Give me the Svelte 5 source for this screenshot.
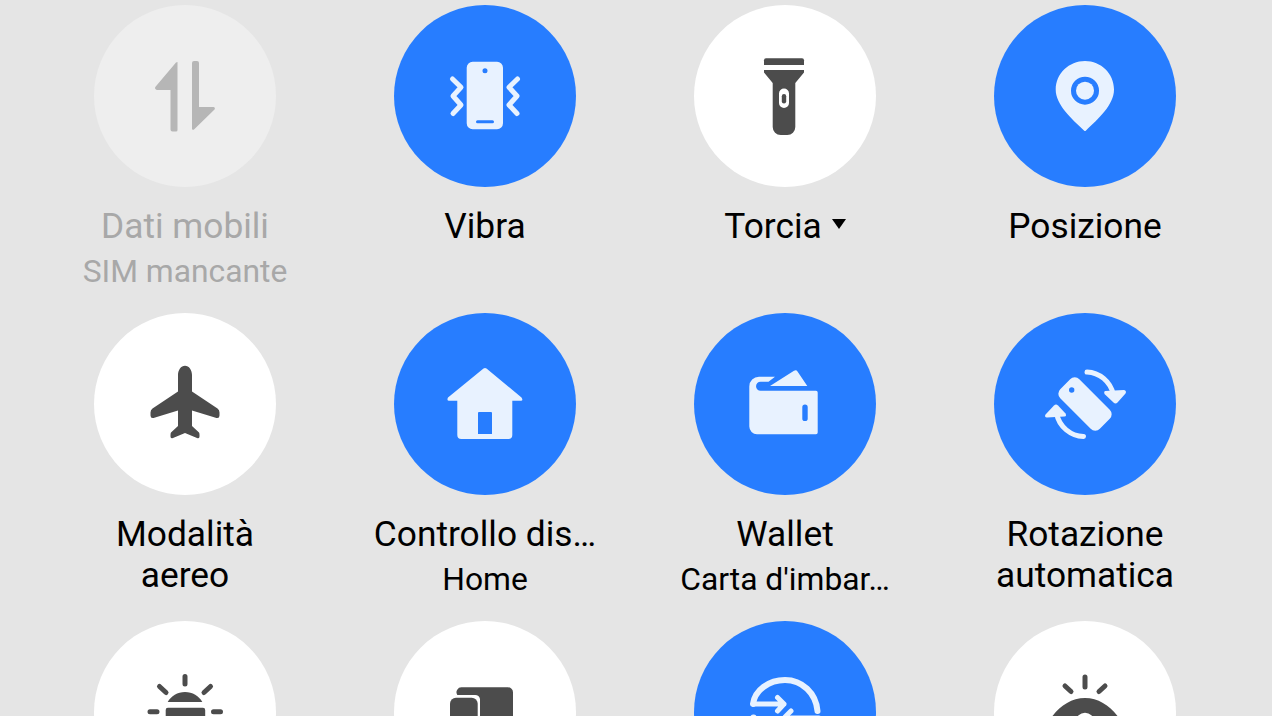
<script>
    const tiles = [
        { icon: "data", label: "Dati mobili", sub: "SIM mancante", state: "off" },
        { icon: "vibrate", label: "Vibra", state: "on" },
        { icon: "torch", label: "Torcia", caret: true, state: "idle" },
        { icon: "pin", label: "Posizione", state: "on" },
        { icon: "plane", label: "Modalità", label2: "aereo", state: "idle" },
        { icon: "home", label: "Controllo dis…", sub: "Home", state: "on" },
        { icon: "wallet", label: "Wallet", sub: "Carta d'imbar…", state: "on" },
        { icon: "rotate", label: "Rotazione", label2: "automatica", state: "on" },
        { icon: "sun", label: "", state: "idle" },
        { icon: "screens", label: "", state: "idle" },
        { icon: "share", label: "", state: "on" },
        { icon: "eye", label: "", state: "idle" },
    ];
</script>

{#snippet glyph(name)}
    {#if name === "data"}
        <path d="M83.5 57V125a1.5 1.5 0 0 1-1.5 1.5H78.500a2 2 0 0 1-2-2V85H63a2 2 0 0 1-1.500-3.300L82 57.500Z" />
        <path d="M98 58a2 2 0 0 1 2-2h3a2 2 0 0 1 2 2V102H119.500a1.500 1.500 0 0 1 1 2.500L100 124.500a1.200 1.200 0 0 1-2-1Z" />
    {:else if name === "vibrate"}
        <path fill-rule="evenodd" d="M78.700 56.700H103a6 6 0 0 1 6 6V118.300a6 6 0 0 1-6 6H78.700a6 6 0 0 1-6-6V62.700a6 6 0 0 1 6-6ZM91 63.200a2.500 2.500 0 1 0 0 5 2.500 2.500 0 0 0 0-5ZM83.500 115.200a1.500 1.500 0 0 0 0 3H98.500a1.500 1.500 0 0 0 0-3Z" />
        <path class="line wide" d="M58.500 74L67 82.300L59 91L67 100L59 108.500" />
        <path class="line wide" d="M123.500 74L115 82.300L123 91L115 100L123 108.500" />
    {:else if name === "torch"}
        <path d="M72 53.300H108a2 2 0 0 1 2 2V60H70V55.300a2 2 0 0 1 2-2Z" />
        <path fill-rule="evenodd" d="M70 65H110V67.500L101.300 78V122a8 8 0 0 1-8 8H86.700a8 8 0 0 1-8-8V78L70 67.500ZM90 83.500a5 5 0 0 0-5 5V98a5 5 0 0 0 10 0V88.500a5 5 0 0 0-5-5Z" />
        <rect x="87.800" y="89" width="4.400" height="9.500" rx="2.200" />
    {:else if name === "pin"}
        <path fill-rule="evenodd" d="M91 56C107 56 120 68.500 120 84.500C120 100 104 114 92 125.500Q91 126.500 90 125.500C78 114 61.700 100 61.700 84.500C61.700 68.500 75 56 91 56ZM91 71.700a14 14 0 1 0 0 28 14 14 0 0 0 0-28Z" />
        <circle cx="91" cy="85.700" r="9" />
    {:else if name === "plane"}
        <path d="M91 52.700C95 52.700 98 57 98 62V78.500L123.500 95.500Q125.500 97 125.500 99.500V102.500Q125.500 105.500 122.500 105L98 97.500V113L105 119.500Q105.500 120 105.500 122V123.500Q105.500 126 103 125L91 120L79 125Q76.500 126 76.500 123.500V122Q76.500 120 77 119.500L84 113V97.500L59.500 105Q56.500 105.500 56.500 102.500V99.500Q56.500 97 58.500 95.500L84 78.500V62C84 57 87 52.700 91 52.700Z" />
    {:else if name === "home"}
        <path fill-rule="evenodd" d="M89.500 55.500Q91 54.300 92.500 55.500L127.500 84.500Q129.500 87.700 127 87.700H118.300V122a4 4 0 0 1-4 4H67.300a4 4 0 0 1-4-4V87.700H55Q52.500 87.700 54 84.500ZM85 99a1 1 0 0 0-1 1V121H98V100a1 1 0 0 0-1-1Z" />
    {:else if name === "wallet"}
        <path fill-rule="evenodd" d="M65 63.700H81L74.500 68.800H66.500a4.300 4.300 0 0 0 0 8.900H122a1.700 1.700 0 0 1 1.700 1.700V119.600a1.700 1.700 0 0 1-1.700 1.700H63a7.700 7.700 0 0 1-7.700-7.700V73.400a9.700 9.700 0 0 1 9.700-9.700ZM111 91.500a2.700 2.700 0 0 0-2.700 2.700V105.400a2.700 2.700 0 0 0 5.400 0V94.200A2.700 2.700 0 0 0 111 91.500Z" />
        <path d="M76 73L100 57.800Q102.300 56.500 103.500 58.500L113.300 73Z" />
    {:else if name === "rotate"}
        <rect x="77.500" y="63" width="27" height="56" rx="6.500" transform="rotate(-45 91 91)" />
        <circle class="hole" cx="77.700" cy="77" r="2.700" />
        <path class="line wide" d="M93 59C105 59.500 116.500 68 119.500 82" />
        <path d="M111 78L130 77Q133 78 131.500 80.500L123.500 89.500Q121.500 91.500 119.500 89.500L110.500 81Q109.500 78.500 111 78Z" />
        <path class="line wide" d="M89.500 123.500C77 123 65 114 62.500 100" />
        <path d="M51.500 101.500L60 92.500Q62 90.500 64 92.500L71.500 100.500Q73 103 70.500 103.500L53 104.500Q50 104 51.500 101.500Z" />
    {:else if name === "sun"}
        <path class="ray" d="M91 55.500V63M65.500 65.500L72 71.500M116.500 65.500L110 71.500M56 90.700H63M119.500 90.700H126.500" />
        <path d="M73.700 81C77 75 83.500 71 91 71C98.500 71 105 75 108.300 81Z" />
        <path d="M74 86.700H109a2.200 2.200 0 0 1 2.200 2.200V100H71.700V88.900a2.200 2.200 0 0 1 2.300-2.200Z" />
    {:else if name === "screens"}
        <path d="M68 66.300H114a5 5 0 0 1 5 5V100H86V78a5 5 0 0 0-5-4H63.300a5 5 0 0 1 4.700-7.700Z" />
        <path d="M62 76.700H77.700a6 6 0 0 1 6 6V100H56V82.700a6 6 0 0 1 6-6Z" />
    {:else if name === "share"}
        <path class="line wider" d="M59 83C61 69 75 59 91 59C108 59 122 72 123.500 90" />
        <path class="line wide" d="M59.500 83H90M83.500 76.500L90 83L83.500 90M97 90L91 96M97 97H125M59 96H60" />
    {:else if name === "eye"}
        <path class="ray" d="M91 56V66M71 65L77 70.500M111 65L105 70.500" />
        <path fill-rule="evenodd" d="M91 77C104 77 115 84 123.500 95V100H58.500V95C67 84 78 77 91 77ZM91 91.700a9 9 0 0 0-9 9H100a9 9 0 0 0-9-9Z" />
    {/if}
{/snippet}

<main class="grid">
    {#each tiles as tile}
        <div class="tile {tile.state}">
            <div class="circle">
                <svg viewBox="0 0 182 182" width="182" height="182">
                    {@render glyph(tile.icon)}
                </svg>
            </div>
            {#if tile.label}
                <div class="label">
                    {tile.label}{#if tile.caret}<span class="caret"></span>{/if}
                </div>
            {/if}
            {#if tile.label2}
                <div class="label">{tile.label2}</div>
            {/if}
            {#if tile.sub}
                <div class="sub">{tile.sub}</div>
            {/if}
        </div>
    {/each}
</main>

<style>
    :global(body) {
        background: #e5e5e5;
        overflow: hidden;
    }

    .grid {
        display: grid;
        grid-template-columns: repeat(4, 300px);
        grid-auto-rows: 308px;
        padding: 5px 0 0 35px;
        height: 711px;
        overflow: hidden;
        font-family: Roboto, sans-serif;
        font-weight: 430;
        color: #000;
    }

    .tile {
        display: flex;
        flex-direction: column;
        align-items: center;
    }

    .circle {
        width: 182px;
        height: 182px;
        flex: none;
        border-radius: 50%;
        margin-bottom: 19px;
    }

    svg {
        display: block;
        fill: currentColor;
    }

    .on .circle {
        background: #277dff;
        color: #e8f2ff;
    }

    .idle .circle {
        background: #fff;
        color: #4c4c4c;
    }

    .off .circle {
        background: #eeeeee;
        color: #b6b6b6;
    }

    .off {
        color: #a8a8a8;
    }

    .line,
    .ray {
        fill: none;
        stroke: currentColor;
        stroke-width: 4.500;
        stroke-linecap: round;
        stroke-linejoin: round;
    }

    .ray {
        stroke-width: 5;
    }

    .wide {
        stroke-width: 5;
    }

    .wider {
        stroke-width: 6;
    }

    .hole {
        fill: #277dff;
    }

    .label {
        font-size: 35.300px;
        line-height: 41px;
        white-space: nowrap;
    }

    .sub {
        font-size: 31.800px;
        line-height: 49px;
        white-space: nowrap;
    }

    .caret {
        display: inline-block;
        margin-left: 10px;
        vertical-align: 9px;
        border-left: 7.500px solid transparent;
        border-right: 7.500px solid transparent;
        border-top: 10px solid #000;
    }
</style>
